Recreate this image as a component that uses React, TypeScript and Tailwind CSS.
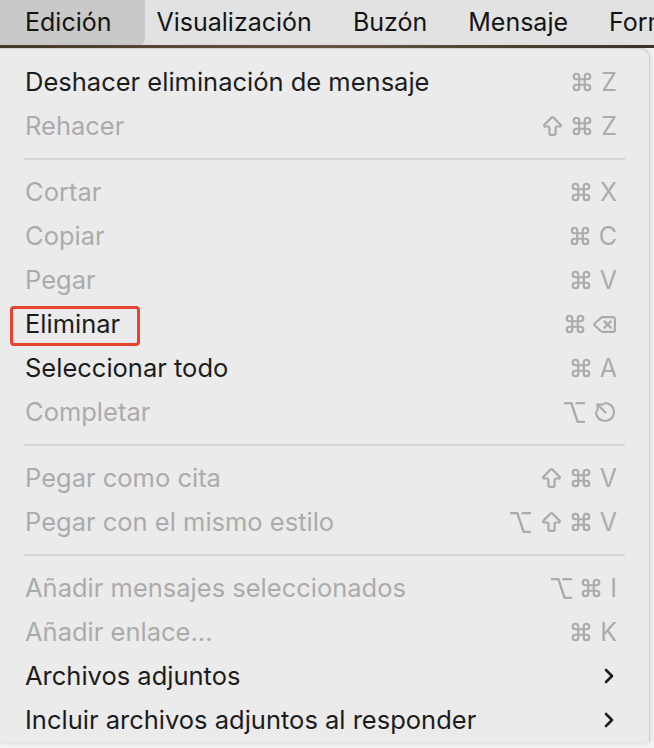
import { ArrowBigUp, ChevronRight, Command, Delete, Option } from 'lucide-react';
import type { ReactNode } from 'react';

type Key = 'cmd' | 'shift' | 'opt' | 'del' | 'esc' | string;

type Item =
  | { kind: 'sep' }
  | { kind: 'item'; label: string; enabled?: boolean; keys?: Key[]; submenu?: boolean; marked?: boolean };

const items: Item[] = [
  { kind: 'item', label: 'Deshacer eliminación de mensaje', enabled: true, keys: ['cmd', 'Z'] },
  { kind: 'item', label: 'Rehacer', keys: ['shift', 'cmd', 'Z'] },
  { kind: 'sep' },
  { kind: 'item', label: 'Cortar', keys: ['cmd', 'X'] },
  { kind: 'item', label: 'Copiar', keys: ['cmd', 'C'] },
  { kind: 'item', label: 'Pegar', keys: ['cmd', 'V'] },
  { kind: 'item', label: 'Eliminar', enabled: true, keys: ['cmd', 'del'], marked: true },
  { kind: 'item', label: 'Seleccionar todo', enabled: true, keys: ['cmd', 'A'] },
  { kind: 'item', label: 'Completar', keys: ['opt', 'esc'] },
  { kind: 'sep' },
  { kind: 'item', label: 'Pegar como cita', keys: ['shift', 'cmd', 'V'] },
  { kind: 'item', label: 'Pegar con el mismo estilo', keys: ['opt', 'shift', 'cmd', 'V'] },
  { kind: 'sep' },
  { kind: 'item', label: 'Añadir mensajes seleccionados', keys: ['opt', 'cmd', 'I'] },
  { kind: 'item', label: 'Añadir enlace…', keys: ['cmd', 'K'] },
  { kind: 'item', label: 'Archivos adjuntos', enabled: true, submenu: true },
  { kind: 'item', label: 'Incluir archivos adjuntos al responder', enabled: true, submenu: true },
];

function EscapeIcon() {
  return (
    <svg width="24" height="24" viewBox="0 0 24 24" fill="none" stroke="currentColor" strokeWidth="2.2" strokeLinecap="round" strokeLinejoin="round">
      <path d="M12 3a9 9 0 1 1-9 9" />
      <path d="M12.5 12.5 4.5 4.5" />
      <path d="M4.5 10.5v-6h6" />
    </svg>
  );
}

function KeyGlyph({ k }: { k: Key }) {
  let glyph: ReactNode;
  switch (k) {
    case 'cmd':
      glyph = <Command size={22} strokeWidth={2.4} />;
      break;
    case 'shift':
      glyph = <ArrowBigUp size={25} strokeWidth={2.1} />;
      break;
    case 'opt':
      glyph = <Option size={25} strokeWidth={2.3} />;
      break;
    case 'del':
      glyph = <Delete size={25} strokeWidth={2.1} />;
      break;
    case 'esc':
      glyph = <EscapeIcon />;
      break;
    default:
      glyph = <span className="ml-[2px] text-[25px] leading-none">{k}</span>;
  }
  return <span className="flex items-center">{glyph}</span>;
}

function MenuRow({ item }: { item: Extract<Item, { kind: 'item' }> }) {
  return (
    <div className="relative flex h-[44px] items-center justify-between pl-[25px] pr-[32px]">
      {item.marked && (
        <div className="absolute left-[10px] top-[4px] h-[40px] w-[130px] rounded-[4px] border-[3px] border-[#e8432e]" />
      )}
      <span className={item.enabled ? 'text-[#1c1c1c]' : 'text-[#ababab]'}>{item.label}</span>
      {item.keys && (
        <div className="flex items-center gap-[6px] text-[#ababab]">
          {item.keys.map((k, i) => (
            <KeyGlyph key={i} k={k} />
          ))}
        </div>
      )}
      {item.submenu && <ChevronRight size={24} strokeWidth={2.6} className="-mr-[4px] text-[#1c1c1c]" />}
    </div>
  );
}

export default function App() {
  return (
    <div
      className="relative h-[748px] w-[654px] overflow-hidden bg-[#f4f4f4] text-[25px]"
      style={{ fontFamily: 'Inter, "Noto Sans", sans-serif' }}
    >
      {/* menu bar */}
      <div className="flex h-[45px] items-center overflow-hidden bg-[#e2e2e2] text-[#141414]">
        <div className="flex h-full shrink-0 items-center rounded-br-[6px] bg-[#c9c9c9] pl-[25px] pr-[33px]">Edición</div>
        <div className="ml-[12px] flex gap-[41px] whitespace-nowrap">
          <span>Visualización</span>
          <span>Buzón</span>
          <span>Mensaje</span>
          <span>Formato</span>
        </div>
      </div>
      <div className="h-[3px] bg-gradient-to-r from-[#4a3b2c] via-[#6b5a46] to-[#3d3328]" />

      {/* dropdown */}
      <div className="absolute left-0 top-[48px] w-[650px] rounded-tr-[10px] border-r border-t border-[#cfcfcf] bg-[#ebebeb] pt-[11px] text-[25.5px] shadow-[0_0_6px_rgba(0,0,0,0.15)]">
        {items.map((item, i) =>
          item.kind === 'sep' ? (
            <div key={i} className="flex h-[22px] items-center px-[24px]">
              <div className="h-[2px] w-full bg-[#d5d5d5]" />
            </div>
          ) : (
            <MenuRow key={i} item={item} />
          ),
        )}
      </div>
    </div>
  );
}
